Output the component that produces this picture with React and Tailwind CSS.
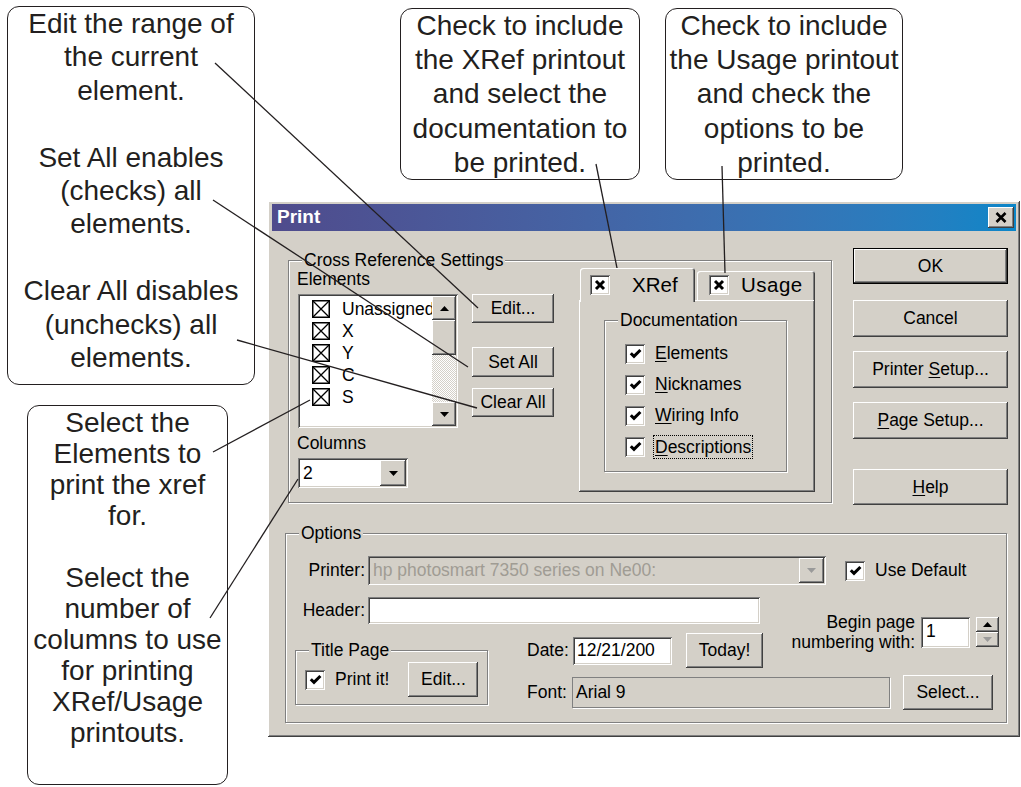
import React from 'react';

const raised = 'shadow-[inset_-1px_-1px_0_#404040,inset_1px_1px_0_#ffffff,inset_-2px_-2px_0_#808080,inset_2px_2px_0_#d4d0c8]';
const sunken = 'shadow-[inset_1px_1px_0_#808080,inset_-1px_-1px_0_#ffffff,inset_2px_2px_0_#404040,inset_-2px_-2px_0_#d4d0c8]';
const etched = 'border border-[#808080] shadow-[inset_1px_1px_0_#ffffff,1px_1px_0_#ffffff]';

const CheckBox = () => (
    <span className={`w-[20px] h-[20px] bg-white shrink-0 flex items-center justify-center ${sunken}`}>
        <svg width="13" height="13" viewBox="0 0 13 13">
            <polyline points="1.8,6.2 5,9.4 11.4,3" fill="none" stroke="#000" strokeWidth="3" />
        </svg>
    </span>
);

const XBox = () => (
    <span className={`w-[20px] h-[20px] bg-white shrink-0 flex items-center justify-center ${sunken}`}>
        <svg width="12" height="12" viewBox="0 0 12 12">
            <path d="M2 2L10 10M10 2L2 10" stroke="#000" strokeWidth="3" />
        </svg>
    </span>
);

const ListBox = () => (
    <svg width="18" height="18" viewBox="0 0 18 18" className="shrink-0">
        <rect x="0.75" y="0.75" width="16.5" height="16.5" fill="none" stroke="#000" strokeWidth="1.5" />
        <path d="M1 1L17 17M17 1L1 17" stroke="#000" strokeWidth="1.3" />
    </svg>
);

const Arrow = ({ up = false, gray = false }) => (
    <svg width="9" height="5" viewBox="0 0 9 5">
        <polygon points={up ? '0,5 9,5 4.5,0' : '0,0 9,0 4.5,5'} fill={gray ? '#9a9a9a' : '#000'} />
    </svg>
);

const Button = ({ children, className = '' }) => (
    <button className={`bg-[#d4d0c8] flex items-center justify-center ${raised} ${className}`}>
        {children}
    </button>
);

const Group = ({ label, className = '', legendClass = '', children }) => (
    <fieldset className={`${etched} ${className}`}>
        <legend className={`bg-[#d4d0c8] px-[2px] leading-[20px] ${legendClass}`}>{label}</legend>
        {children}
    </fieldset>
);

const Callout = ({ className, children }) => (
    <div className={`absolute border-[1.5px] border-[#231f20] rounded-[12px] bg-white text-center text-[#231f20] text-[28px] ${className}`}>
        {children}
    </div>
);

const U = ({ children }) => <span className="underline underline-offset-2">{children}</span>;

export default function App() {
    const items = ['Unassigned', 'X', 'Y', 'C', 'S'];
    const docs = [
        [<U key="e">E</U>, 'lements'],
        [<U key="n">N</U>, 'icknames'],
        [<U key="w">W</U>, 'iring Info'],
    ];

    return (
        <div className="relative w-[1021px] h-[787px] bg-white overflow-hidden font-['Liberation_Sans',Arial,sans-serif]">
            {/* Callouts */}
            <Callout className="left-[7px] top-[6px] w-[248px] h-[379px] leading-[33.4px]">
                Edit the range of<br />the current<br />element.<br /><br />
                Set All enables<br />(checks) all<br />elements.<br /><br />
                Clear All disables<br />(unchecks) all<br />elements.
            </Callout>
            <Callout className="left-[27px] top-[405px] w-[201px] h-[380px] pt-[1px] leading-[31px]">
                Select the<br />Elements to<br />print the xref<br />for.<br /><br />
                Select the<br />number of<br />columns to use<br />for printing<br />XRef/Usage<br />printouts.
            </Callout>
            <Callout className="left-[400px] top-[8px] w-[240px] h-[172px] leading-[34.2px]">
                Check to include<br />the XRef printout<br />and select the<br />documentation to<br />be printed.
            </Callout>
            <Callout className="left-[665px] top-[8px] w-[238px] h-[172px] leading-[34.2px]">
                Check to include<br />the Usage printout<br />and check the<br />options to be<br />printed.
            </Callout>

            {/* Dialog window */}
            <div className={`absolute left-[268px] top-[201px] w-[752px] h-[536px] bg-[#d4d0c8] px-[4px] pt-[3px] flex flex-col text-[17.5px] text-black ${raised}`}>
                <div className="h-[27px] shrink-0 flex items-center justify-between bg-gradient-to-r from-[#4f4b8c] to-[#0a86c8] pl-[5px] pr-[2px]">
                    <span className="text-white font-bold text-[19px]">Print</span>
                    <Button className="w-[26px] h-[21px]">
                        <svg width="12" height="11" viewBox="0 0 12 11">
                            <path d="M1.5 1L10.5 10M10.5 1L1.5 10" stroke="#000" strokeWidth="2.6" />
                        </svg>
                    </Button>
                </div>

                <div className="flex items-start h-[274px] shrink-0">
                    <Group label="Cross Reference Settings" className="ml-[16px] mt-[19px] w-[544px] h-[253px]" legendClass="ml-[13px]">
                        <div className="flex items-start">
                            <div className="flex flex-col pl-[8px] w-[266px]">
                                <div className="leading-[20px] mt-[-1px]">Elements</div>
                                <div className="flex items-start mt-[5px]">
                                    <div className={`ml-[1px] w-[160px] h-[134px] bg-white flex p-[2px] ${sunken}`}>
                                        <div className="flex-1 flex flex-col pt-[2px] overflow-hidden">
                                            {items.map((it) => (
                                                <div key={it} className="h-[22px] flex items-center pl-[12px] gap-[12px] whitespace-nowrap">
                                                    <ListBox />
                                                    <span>{it}</span>
                                                </div>
                                            ))}
                                        </div>
                                        <div className="w-[24px] flex flex-col">
                                            <Button className="h-[24px]"><Arrow up /></Button>
                                            <div className={`h-[35px] bg-[#d4d0c8] ${raised}`} />
                                            <div className="flex-1 bg-[repeating-conic-gradient(#d4d0c8_0_25%,#ffffff_0_50%)] bg-size-[2px_2px]" />
                                            <Button className="h-[24px]"><Arrow /></Button>
                                        </div>
                                    </div>
                                    <div className="ml-[14px] flex flex-col">
                                        <Button className="w-[82px] h-[29px]">Edit...</Button>
                                        <Button className="w-[82px] h-[30px] mt-[24px]">Set All</Button>
                                        <Button className="w-[82px] h-[29px] mt-[11px]">Clear All</Button>
                                    </div>
                                </div>
                                <div className="leading-[20px] mt-[5px]">Columns</div>
                                <div className={`ml-[1px] mt-[5px] w-[110px] h-[30px] bg-white flex items-stretch p-[2px] ${sunken}`}>
                                    <span className="flex-1 pl-[3px] flex items-center">2</span>
                                    <Button className="w-[26px]"><Arrow /></Button>
                                </div>
                            </div>

                            {/* Tab control */}
                            <div className="ml-[24px] mt-[-2px] w-[236px] flex flex-col">
                                <div className="flex items-end h-[32px]">
                                    <div className="relative z-10 ml-[1px] w-[115px] h-[34px] mb-[-2px] self-start bg-[#d4d0c8] rounded-t-[3px] shadow-[inset_1px_1px_0_#ffffff,inset_-1px_0_0_#404040,inset_-2px_0_0_#808080] flex items-start pt-[7px] pl-[10px]">
                                        <XBox />
                                        <span className="ml-[22px] text-[20.5px] leading-[20px]">XRef</span>
                                    </div>
                                    <div className="ml-[2px] w-[118px] h-[29px] bg-[#d4d0c8] rounded-t-[3px] shadow-[inset_1px_1px_0_#ffffff,inset_-1px_0_0_#404040,inset_-2px_0_0_#808080] flex items-start pt-[4px] pl-[12px]">
                                        <XBox />
                                        <span className="ml-[12px] text-[20.5px] leading-[20px] tracking-[0.5px]">Usage</span>
                                    </div>
                                </div>
                                <div className={`h-[192px] bg-[#d4d0c8] pt-[10px] ${raised}`}>
                                    <Group label="Documentation" className="ml-[25px] w-[183px] h-[162px]" legendClass="ml-[13px]">
                                        <div className="flex flex-col pt-[8px] pl-[20px]">
                                            {docs.map(([u, rest], i) => (
                                                <div key={i} className="h-[31px] flex items-center">
                                                    <CheckBox />
                                                    <span className="ml-[10px]">{u}{rest}</span>
                                                </div>
                                            ))}
                                            <div className="h-[31px] flex items-center">
                                                <CheckBox />
                                                <span className="ml-[8px] px-[1px] border border-dotted border-black leading-[22px]"><U>D</U>escriptions</span>
                                            </div>
                                        </div>
                                    </Group>
                                </div>
                            </div>
                        </div>
                    </Group>

                    <div className="ml-[21px] mt-[17px] w-[155px] flex flex-col">
                        <Button className="h-[36px] border border-black">OK</Button>
                        <Button className="h-[37px] mt-[16px]">Cancel</Button>
                        <Button className="h-[37px] mt-[14px]">Printer&nbsp;<U>S</U>etup...</Button>
                        <Button className="h-[37px] mt-[14px]"><U>P</U>age Setup...</Button>
                        <Button className="h-[36px] mt-[30px]"><U>H</U>elp</Button>
                    </div>
                </div>

                <Group label="Options" className="ml-[13px] mt-[18px] w-[722px] h-[200px]" legendClass="ml-[13px]">
                    <div className="flex items-center mt-[13px] h-[29px]">
                        <span className="w-[82px] text-right pr-[3px]">Printer:</span>
                        <div className={`w-[458px] h-[29px] bg-[#d4d0c8] flex items-stretch p-[2px] ${sunken}`}>
                            <span className="flex-1 pl-[3px] flex items-center text-[#a09c94] whitespace-nowrap overflow-hidden">hp photosmart 7350 series on Ne00:</span>
                            <Button className="w-[25px]"><Arrow gray /></Button>
                        </div>
                        <span className="ml-[19px]"><CheckBox /></span>
                        <span className="ml-[10px]">Use Default</span>
                    </div>

                    <div className="flex items-start mt-[12px] h-[51px]">
                        <span className="w-[82px] h-[27px] flex items-center justify-end pr-[3px]">Header:</span>
                        <div className={`w-[392px] h-[27px] bg-white ${sunken}`} />
                        <div className="ml-auto mr-[7px] mt-[20px] flex items-start">
                            <span className="text-right leading-[20px] mt-[-5px]">Begin page<br />numbering with:</span>
                            <div className={`ml-[6px] w-[49px] h-[31px] bg-white pl-[5px] pt-[4px] leading-[20px] ${sunken}`}>1</div>
                            <div className="ml-[6px] w-[23px] h-[30px] flex flex-col">
                                <Button className="h-[15px]"><Arrow up /></Button>
                                <Button className="h-[15px]"><Arrow gray /></Button>
                            </div>
                        </div>
                    </div>

                    <div className="flex items-start mt-[-15px]">
                        <Group label="Title Page" className="ml-[9px] mt-[7px] w-[193px] h-[65px]" legendClass="ml-[13px]">
                            <div className="flex items-center h-[35px] mt-[2px] pl-[9px]">
                                <CheckBox />
                                <span className="ml-[10px]">Print it!</span>
                                <Button className="ml-[19px] w-[70px] h-[35px]">Edit...</Button>
                            </div>
                        </Group>
                        <div className="ml-[39px] flex flex-col">
                            <div className="flex items-center h-[35px]">
                                <span className="w-[46px]">Date:</span>
                                <div className={`w-[99px] h-[28px] bg-white pl-[4px] flex items-center ${sunken}`}>12/21/200</div>
                                <Button className="ml-[14px] w-[77px] h-[35px]">Today!</Button>
                            </div>
                            <div className="flex items-center h-[35px] mt-[7px]">
                                <span className="w-[45px]">Font:</span>
                                <div className="w-[318px] h-[31px] border border-[#808080] shadow-[1px_1px_0_#ffffff] pl-[3px] flex items-center">Arial 9</div>
                                <Button className="ml-[13px] w-[90px] h-[35px]">Select...</Button>
                            </div>
                        </div>
                    </div>
                </Group>
            </div>

            {/* Leader lines */}
            <svg className="absolute inset-0 pointer-events-none" width="1021" height="787">
                <g stroke="#231f20" strokeWidth="1.3" fill="none">
                    <line x1="215" y1="63" x2="478" y2="308" />
                    <line x1="213" y1="200" x2="468" y2="367" />
                    <line x1="237" y1="340" x2="477" y2="408" />
                    <line x1="213" y1="452" x2="310" y2="400" />
                    <line x1="210" y1="618" x2="298" y2="479" />
                    <line x1="596" y1="164" x2="619" y2="278" />
                    <line x1="722" y1="166" x2="725" y2="273" />
                </g>
            </svg>
        </div>
    );
}
